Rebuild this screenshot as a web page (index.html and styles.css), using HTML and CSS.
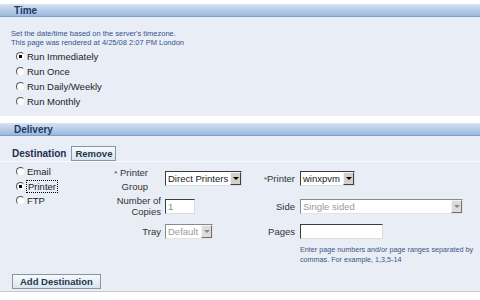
FILE: index.html
```html
<!DOCTYPE html>
<html lang="en">
<head>
	<meta charset="UTF-8">
	<title>Schedule Report</title>
	<link rel="stylesheet" href="styles.css">
</head>
<body>
	<div class="section time">
		<div class="section-head">Time</div>
		<div class="section-body">
			<p class="note">Set the date/time based on the server's timezone.<br>This page was rendered at 4/25/08 2:07 PM London</p>
			<ul class="radio-list">
				<li><label><input type="radio" name="when" checked>Run Immediately</label></li>
				<li><label><input type="radio" name="when">Run Once</label></li>
				<li><label><input type="radio" name="when">Run Daily/Weekly</label></li>
				<li><label><input type="radio" name="when">Run Monthly</label></li>
			</ul>
		</div>
	</div>

	<div class="section delivery">
		<div class="section-head">Delivery</div>
		<div class="section-body">
			<div class="dest-bar">
				<span class="dest-title">Destination</span>
				<button class="btn">Remove</button>
			</div>
			<div class="dest-row">
				<ul class="dest-types">
					<li><label><input type="radio" name="dest">Email</label></li>
					<li><label><input type="radio" name="dest" checked><span class="focus">Printer</span></label></li>
					<li><label><input type="radio" name="dest">FTP</label></li>
				</ul>

				<div class="lbl lbl-group"><span class="req">*</span> Printer<br>Group</div>
				<div class="field">
					<span class="select select-group"><span class="select-text">Direct Printers</span><span class="select-btn"></span></span>
				</div>
				<div class="lbl lbl-right"><span class="req">*</span>Printer</div>
				<div class="field">
					<span class="select select-printer"><span class="select-text">winxpvm</span><span class="select-btn"></span></span>
				</div>

				<div class="lbl lbl-copies">Number of<br>Copies</div>
				<div class="field"><input class="text copies" type="text" value="1"></div>
				<div class="lbl lbl-right">Side</div>
				<div class="field">
					<span class="select select-side disabled"><span class="select-text">Single sided</span><span class="select-btn"></span></span>
				</div>

				<div class="lbl">Tray</div>
				<div class="field">
					<span class="select select-tray disabled"><span class="select-text">Default</span><span class="select-btn"></span></span>
				</div>
				<div class="lbl lbl-right">Pages</div>
				<div class="field"><input class="text pages" type="text"></div>

				<p class="hint">Enter page numbers and/or page ranges separated by<br>commas. For example, 1,3,5-14</p>
			</div>
			<button class="btn btn-add">Add Destination</button>
		</div>
	</div>
</body>
</html>
```

FILE: styles.css
```css
* {
	margin: 0;
	padding: 0;
	box-sizing: border-box;
}
body {
	background: #fff;
	padding-top: 4px;
	font-family: "Liberation Sans", Arial, sans-serif;
	font-size: 9.5px;
	color: #222;
}
ul {
	list-style: none;
}

.section-head {
	height: 13px;
	padding-left: 14px;
	border-top: 1px solid #d8e2ee;
	border-bottom: 1px solid #7f9fcb;
	background: linear-gradient(#cfdef0, #9bb9dc);
	font-size: 10px;
	font-weight: bold;
	line-height: 11px;
	color: #1f3864;
}
.section-body {
	background: #e9edf5;
}

/* time */
.time {
	margin-bottom: 7px;
}
.time .section-body {
	height: 99px;
	padding: 12px 0 0 11px;
}
.note,
.hint {
	font-size: 7.5px;
	line-height: 9px;
	color: #34548c;
}
.radio-list {
	margin-top: 2px;
	padding-left: 5px;
}
.radio-list li {
	line-height: 15px;
}

input[type="radio"] {
	appearance: none;
	width: 9px;
	height: 9px;
	margin-right: 2px;
	vertical-align: -1px;
	border-radius: 50%;
	border: 1px solid;
	border-color: #555 #e9edf5 #e9edf5 #555;
	background: #fff;
}
input[type="radio"]:checked {
	background: radial-gradient(circle, #000 1.6px, #fff 2px);
}

/* delivery */
.delivery .section-body {
	padding: 9px 0 2px;
	border-bottom: 1px solid #cdc9bc;
}
.dest-bar {
	display: flex;
	align-items: center;
	height: 17px;
	padding-left: 12px;
	border-bottom: 1px solid #f8f9fc;
}
.dest-title {
	font-size: 10px;
	font-weight: bold;
	color: #1d2f4f;
}
.btn {
	height: 15px;
	padding: 0 3px;
	margin-left: 5px;
	border: 1px solid #8497aa;
	background: linear-gradient(#f7fafc, #d9e4ed);
	font-family: inherit;
	font-size: 9.5px;
	font-weight: bold;
	color: #22374d;
}
.btn-add {
	margin: 10px 0 0 12px;
	padding: 0 7px;
}

.dest-row {
	display: grid;
	grid-template-columns: 88px 65px 91px 44px 1fr;
	grid-template-rows: 26px 22px 20px auto;
	row-gap: 4px;
	align-items: center;
	margin-top: 3px;
	padding-left: 12px;
}
.dest-types {
	grid-row: 1 / 4;
	align-self: start;
	padding-left: 4px;
}
.dest-types li {
	line-height: 14.5px;
}
.focus {
	outline: 1px dotted #000;
	outline-offset: 0;
	padding: 0 1px;
}

.lbl {
	text-align: right;
	padding-right: 4px;
	color: #333;
}
.lbl-group {
	padding: 3px 17px 0 0;
	line-height: 13px;
}
.lbl-copies {
	line-height: 11px;
}
.lbl-right {
	padding-right: 5px;
}
.req {
	font-size: 8px;
	color: #444;
}
.field {
	display: flex;
}

.select {
	display: inline-flex;
	height: 15px;
	border: 1px solid;
	border-color: #3c3c3c #dcdcdc #dcdcdc #3c3c3c;
	background: #fff;
	color: #222;
}
.select-text {
	flex: 1;
	padding-left: 2px;
	line-height: 13px;
	white-space: nowrap;
	overflow: hidden;
}
.select-btn {
	display: flex;
	align-items: center;
	justify-content: center;
	width: 11px;
	border: 1px solid;
	border-color: #f4f4f4 #404040 #404040 #f4f4f4;
	background: #d4d0c8;
}
.select-btn::after {
	content: "";
	border-left: 3px solid transparent;
	border-right: 3px solid transparent;
	border-top: 3px solid #000;
}
.select.disabled {
	border-color: #8a8a8a #e4e4e4 #e4e4e4 #8a8a8a;
	color: #9a9a9a;
}
.select.disabled .select-btn {
	border-color: #f4f4f4 #707070 #707070 #f4f4f4;
	background: #dcdcdc;
}
.select.disabled .select-btn::after {
	border-top-color: #888;
}
.select-group {
	width: 77px;
}
.select-printer {
	width: 55px;
}
.select-side {
	width: 163px;
}
.select-tray {
	width: 48px;
}

.text {
	height: 15px;
	padding-left: 2px;
	border: 1px solid;
	border-color: #3c3c3c #dcdcdc #dcdcdc #3c3c3c;
	background: #fff;
	font-family: inherit;
	font-size: 9.5px;
	color: #8a8a8a;
}
.copies {
	width: 30px;
}
.pages {
	width: 83px;
}

.hint {
	grid-column: 5;
	align-self: start;
	font-size: 7.2px;
	line-height: 9.5px;
	white-space: nowrap;
	color: #3a5683;
}
```
